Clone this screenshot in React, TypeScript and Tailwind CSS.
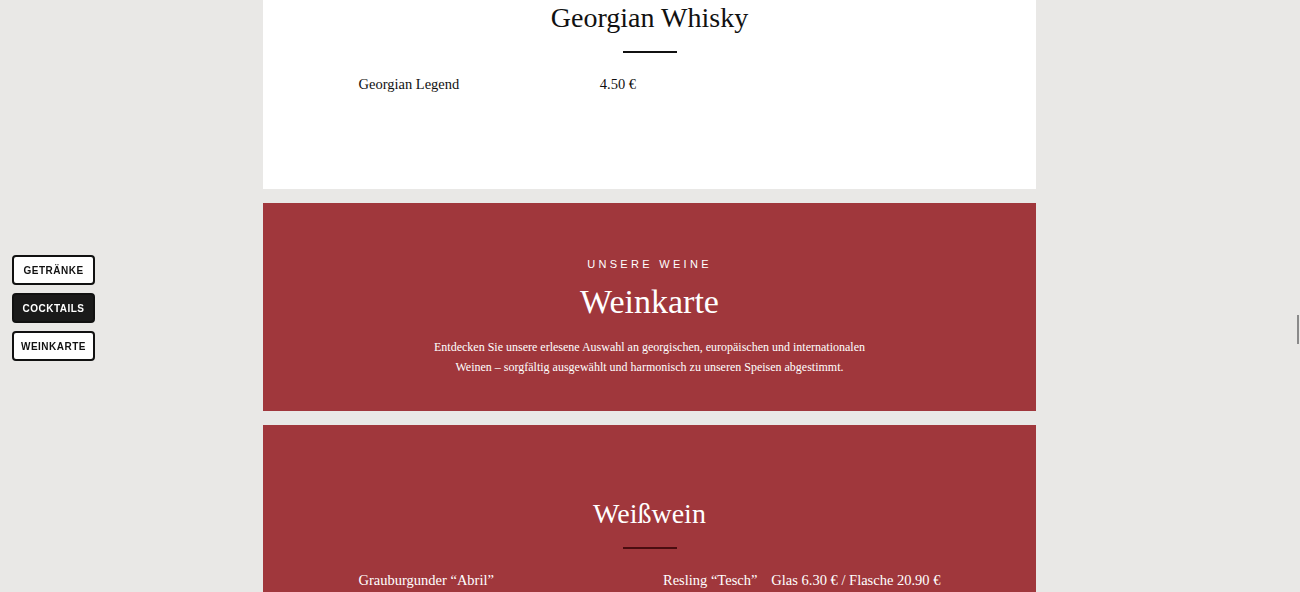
import React from 'react';

type Item = { name: string; price: string };

const serif = { fontFamily: '"Liberation Serif", "DejaVu Serif", serif' };
const sans = { fontFamily: '"Liberation Sans", Arial, sans-serif' };

const whisky: Item[] = [{ name: 'Georgian Legend', price: '4.50 €' }];

const weisswein: Item[] = [
  { name: 'Grauburgunder “Abril”', price: '' },
  { name: 'Resling “Tesch”', price: 'Glas 6.30 € / Flasche 20.90 €' },
];

const nav = ['GETRÄNKE', 'COCKTAILS', 'WEINKARTE'];

const MenuRow: React.FC<{ item: Item }> = ({ item }) => (
  <div className="flex justify-between items-baseline">
    <span>{item.name}</span>
    <span>{item.price}</span>
  </div>
);

const App: React.FC = () => {
  return (
    <div className="min-h-[592px] bg-[#e9e8e6] overflow-hidden relative">
      {/* side nav */}
      <nav className="fixed left-[12px] top-[255px] flex flex-col gap-[8px] z-10">
        {nav.map((label) => (
          <button
            key={label}
            className={`w-[83px] h-[30px] rounded-[4px] border-2 border-[#111] text-[10px] font-bold tracking-[0.05em] ${
              label === 'COCKTAILS' ? 'bg-[#1a1a1a] text-white' : 'bg-white text-[#111]'
            }`}
            style={sans}
          >
            {label}
          </button>
        ))}
      </nav>

      {/* scroll indicator */}
      <div className="fixed right-[1px] top-[315px] w-[2px] h-[29px] bg-[#8a8a8a]" />

      <main className="flex justify-center pr-[1px]">
        <div className="w-[773px] flex flex-col gap-[14px]" style={serif}>
          {/* Georgian Whisky */}
          <section className="bg-white h-[189px] pt-[2px] text-[#111]">
            <h2 className="text-center text-[28px] leading-[32px]">Georgian Whisky</h2>
            <div className="mx-auto mt-[17px] w-[54px] h-[2px] bg-[#111]" />
            <div className="mx-auto mt-[21px] w-[582px] grid grid-cols-2 gap-x-[27px] text-[14.5px]">
              {whisky.map((it) => (
                <MenuRow key={it.name} item={it} />
              ))}
            </div>
          </section>

          {/* Weinkarte intro */}
          <section className="bg-[#a0373c] h-[208px] pt-[54px] text-white text-center">
            <p className="text-[11px] tracking-[0.3em] leading-[14px]" style={sans}>
              UNSERE WEINE
            </p>
            <h1 className="mt-[9px] text-[34px] leading-[44px]">Weinkarte</h1>
            <p className="mx-auto mt-[13px] w-[460px] text-[12px] leading-[20px]">
              Entdecken Sie unsere erlesene Auswahl an georgischen, europäischen und internationalen
              <br />
              Weinen – sorgfältig ausgewählt und harmonisch zu unseren Speisen abgestimmt.
            </p>
          </section>

          {/* Weißwein */}
          <section className="bg-[#a0373c] h-[300px] pt-[72px] text-white">
            <h2 className="text-center text-[28px] leading-[34px]">Weißwein</h2>
            <div className="mx-auto mt-[16px] w-[54px] h-[2px] bg-[#4a0d10]" />
            <div className="mx-auto mt-[21px] w-[582px] grid grid-cols-2 gap-x-[27px] text-[14.5px]">
              {weisswein.map((it) => (
                <MenuRow key={it.name} item={it} />
              ))}
            </div>
          </section>
        </div>
      </main>
    </div>
  );
};

export default App;
